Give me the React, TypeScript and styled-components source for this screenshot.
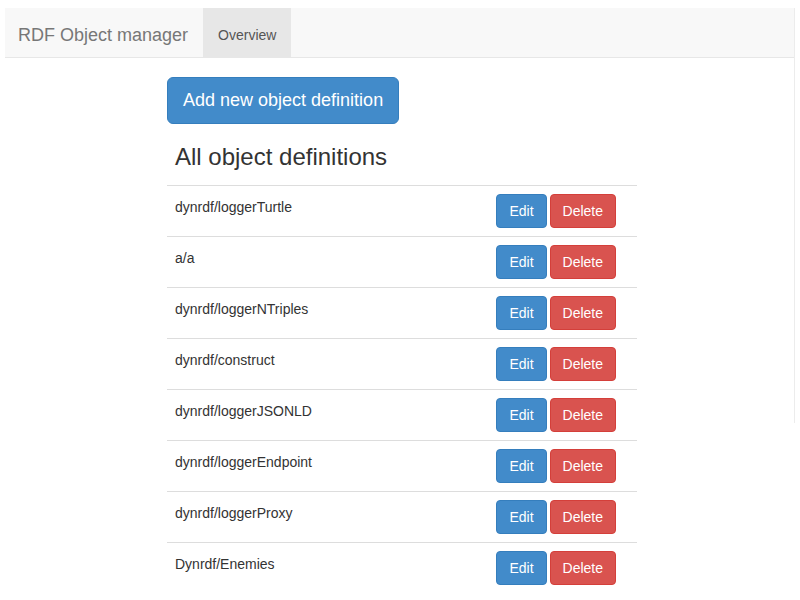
import React from 'react';
import styled, { createGlobalStyle } from 'styled-components';

const GlobalStyle = createGlobalStyle`
  body {
    margin: 8px 5px 0 5px;
    font-family: "Liberation Sans", Arial, Helvetica, sans-serif;
    font-size: 14px;
    line-height: 1.42857;
    color: #333;
    background: #fff;
  }
`;

const definitions: string[] = [
    'dynrdf/loggerTurtle',
    'a/a',
    'dynrdf/loggerNTriples',
    'dynrdf/construct',
    'dynrdf/loggerJSONLD',
    'dynrdf/loggerEndpoint',
    'dynrdf/loggerProxy',
    'Dynrdf/Enemies',
];

const App: React.FC = () => {
    return (
        <>
            <GlobalStyle />
            <Layout>
                <Column>
                    <Navbar>
                        <Brand>RDF Object manager</Brand>
                        <NavItem active>Overview</NavItem>
                    </Navbar>
                    <Main>
                        <Button variant="primary" size="lg">Add new object definition</Button>
                        <Heading>All object definitions</Heading>
                        <Table>
                            {definitions.map((name) => (
                                <Row key={name}>
                                    <NameCell>{name}</NameCell>
                                    <ActionCell>
                                        <Button variant="primary">Edit</Button>
                                        <Button variant="danger">Delete</Button>
                                    </ActionCell>
                                </Row>
                            ))}
                        </Table>
                    </Main>
                </Column>
                <Edge />
            </Layout>
        </>
    );
};

export default App;

const Layout = styled.div`
    display: flex;
    align-items: flex-start;
`;

const Column = styled.div`
    flex: 1;
    min-width: 0;
`;

const Edge = styled.div`
    width: 1px;
    height: 415px;
    background: #ececec;
`;

const Navbar = styled.nav`
    display: flex;
    height: 49px;
    background: #f8f8f8;
    border-bottom: 1px solid #e7e7e7;
`;

const Brand = styled.div`
    padding: 0 15px 0 13px;
    font-size: 18px;
    line-height: 54px;
    color: #777;
`;

const NavItem = styled.div<{ active?: boolean }>`
    padding: 0 15px;
    font-size: 14px;
    line-height: 55px;
    color: #555;
    background: ${(p) => (p.active ? '#e7e7e7' : 'transparent')};
`;

const Main = styled.main`
    width: 470px;
    margin: 19px 0 0 162px;
`;

const Button = styled.button<{ variant: 'primary' | 'danger'; size?: 'lg' }>`
    display: inline-block;
    font-family: inherit;
    font-size: ${(p) => (p.size === 'lg' ? '18px' : '14px')};
    line-height: ${(p) => (p.size === 'lg' ? '25px' : '20px')};
    padding: ${(p) => (p.size === 'lg' ? '10px 15px' : '6px 12px')};
    border-radius: ${(p) => (p.size === 'lg' ? '6px' : '4px')};
    color: #fff;
    background: ${(p) => (p.variant === 'primary' ? '#428bca' : '#d9534f')};
    border: 1px solid ${(p) => (p.variant === 'primary' ? '#357ebd' : '#d43f3a')};
    cursor: pointer;
    & + & {
        margin-left: 3px;
    }
`;

const Heading = styled.h3`
    margin: 20px 0 15px;
    padding-left: 8px;
    font-size: 24px;
    font-weight: 500;
    line-height: 1.1;
`;

const Table = styled.div`
    display: flex;
    flex-direction: column;
`;

const Row = styled.div`
    display: flex;
    justify-content: space-between;
    border-top: 1px solid #ddd;
`;

const NameCell = styled.div`
    padding: 12px 8px 8px;
`;

const ActionCell = styled.div`
    display: flex;
    padding: 8px 21px 8px 8px;
`;
